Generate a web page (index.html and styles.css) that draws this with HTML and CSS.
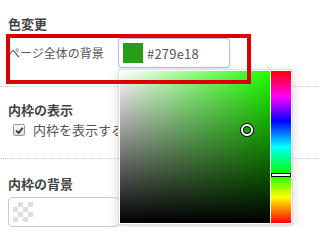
FILE: index.html
```html
<!DOCTYPE html>
<html lang="ja">
<head>
<meta charset="UTF-8">
<title>色変更</title>
<link rel="stylesheet" href="styles.css">
</head>
<body>

<section class="setting-group first">
  <h3 class="setting-title">色変更</h3>
  <div class="field-row">
    <label class="field-label">ページ全体の背景</label>
    <div class="color-field">
      <div class="color-input focused">
        <span class="swatch" style="background: #279e18;"></span>
        <span class="color-value">#279e18</span>
      </div>
      <div class="picker">
        <div class="sat-box">
          <span class="sat-handle"></span>
        </div>
        <div class="hue-bar">
          <span class="hue-handle"></span>
        </div>
      </div>
    </div>
    <div class="highlight"></div>
  </div>
</section>

<section class="setting-group second">
  <h3 class="setting-title">内枠の表示</h3>
  <label class="check-row">
    <span class="checkbox">
      <svg width="9" height="9" viewBox="0 0 9 9"><path d="M1.2 4.6 L3.6 7 L7.8 1.8" fill="none" stroke="#333" stroke-width="1.8"/></svg>
    </span>
    <span>内枠を表示する</span>
  </label>
</section>

<section class="setting-group third">
  <h3 class="setting-title">内枠の背景</h3>
  <div class="color-input empty">
    <span class="swatch checker"></span>
  </div>
</section>

</body>
</html>
```

FILE: styles.css
```css
/* settings panel - colour options */
body {
  margin: 0;
  background: #fff;
  font-family: "Noto Sans CJK JP", "Noto Sans", sans-serif;
  color: #555;
  overflow: hidden;
}

.setting-group {
  padding: 0 8px;
  border-bottom: 1px dotted #ccc;
}

.setting-group.first {
  padding-top: 16px;
  padding-bottom: 18px;
}

.setting-group.second {
  padding-top: 15px;
  padding-bottom: 20px;
}

.setting-group.third {
  padding-top: 17px;
  border-bottom: none;
}

.setting-title {
  margin: 0;
  font-size: 13px;
  line-height: 16px;
  font-weight: bold;
  color: #444;
}

.field-row {
  position: relative;
  display: flex;
  align-items: center;
  margin-top: 6px;
}

.field-label {
  width: 110px;
  font-size: 12px;
  line-height: 16px;
  white-space: nowrap;
}

.color-field {
  position: relative;
}

.color-input {
  display: flex;
  align-items: center;
  gap: 4px;
  box-sizing: border-box;
  height: 30px;
  padding: 0 4px;
  border: 1px solid #ccc;
  border-radius: 4px;
  background: #fff;
}

.color-input.focused {
  width: 112px;
  border-color: #a7c4e4;
  box-shadow: 0 0 2px rgba(80,140,210,0.3);
}

.color-input.empty {
  width: 111px;
  margin-top: 5px;
}

.swatch {
  width: 20px;
  height: 20px;
  flex: none;
}

.swatch.checker {
  background-color: #fff;
  background-image:
    linear-gradient(45deg, #ddd 25%, transparent 25%, transparent 75%, #ddd 75%),
    linear-gradient(45deg, #ddd 25%, transparent 25%, transparent 75%, #ddd 75%);
  background-size: 10px 10px;
  background-position: 0 0, 5px 5px;
}

.color-value {
  font-size: 13px;
  color: #555;
  letter-spacing: 0.2px;
}

.picker {
  position: absolute;
  top: 31px;
  left: 0;
  z-index: 5;
  display: flex;
  gap: 1px;
  padding: 1px;
  background: #fff;
  border: 1px solid #ddd;
  box-shadow: 0 3px 10px rgba(0,0,0,0.15);
}

.sat-box {
  position: relative;
  width: 150px;
  height: 152px;
  background:
    linear-gradient(to top, #000, rgba(0,0,0,0)),
    linear-gradient(to right, #fff, rgba(255,255,255,0)),
    rgb(30,255,0);
}

.sat-handle {
  position: absolute;
  left: 121px;
  top: 53px;
  width: 8px;
  height: 8px;
  border: 2px solid #fff;
  border-radius: 50%;
  box-shadow: 0 0 0 1px #000, inset 0 0 0 1px #000;
}

.hue-bar {
  position: relative;
  width: 20px;
  height: 152px;
  background: linear-gradient(to bottom, #f00, #f0f 17%, #00f 33%, #0ff 50%, #0f0 67%, #ff0 83%, #f00);
}

.hue-handle {
  position: absolute;
  left: 0;
  right: 0;
  top: 102px;
  height: 2px;
  background: #fff;
  border: 1px solid #000;
}

.highlight {
  position: absolute;
  left: -2px;
  top: -4px;
  z-index: 10;
  box-sizing: border-box;
  width: 245px;
  height: 50px;
  border: 4px solid #dc0000;
  pointer-events: none;
}

.check-row {
  display: flex;
  align-items: center;
  margin-top: 4px;
  font-size: 13px;
  line-height: 16px;
  white-space: nowrap;
}

.checkbox {
  display: flex;
  align-items: center;
  justify-content: center;
  box-sizing: border-box;
  width: 12px;
  height: 12px;
  margin: 0 8px 0 5px;
  border: 1px solid #999;
  border-radius: 2px;
  background: linear-gradient(#fafafa, #dcdcdc);
}
```
